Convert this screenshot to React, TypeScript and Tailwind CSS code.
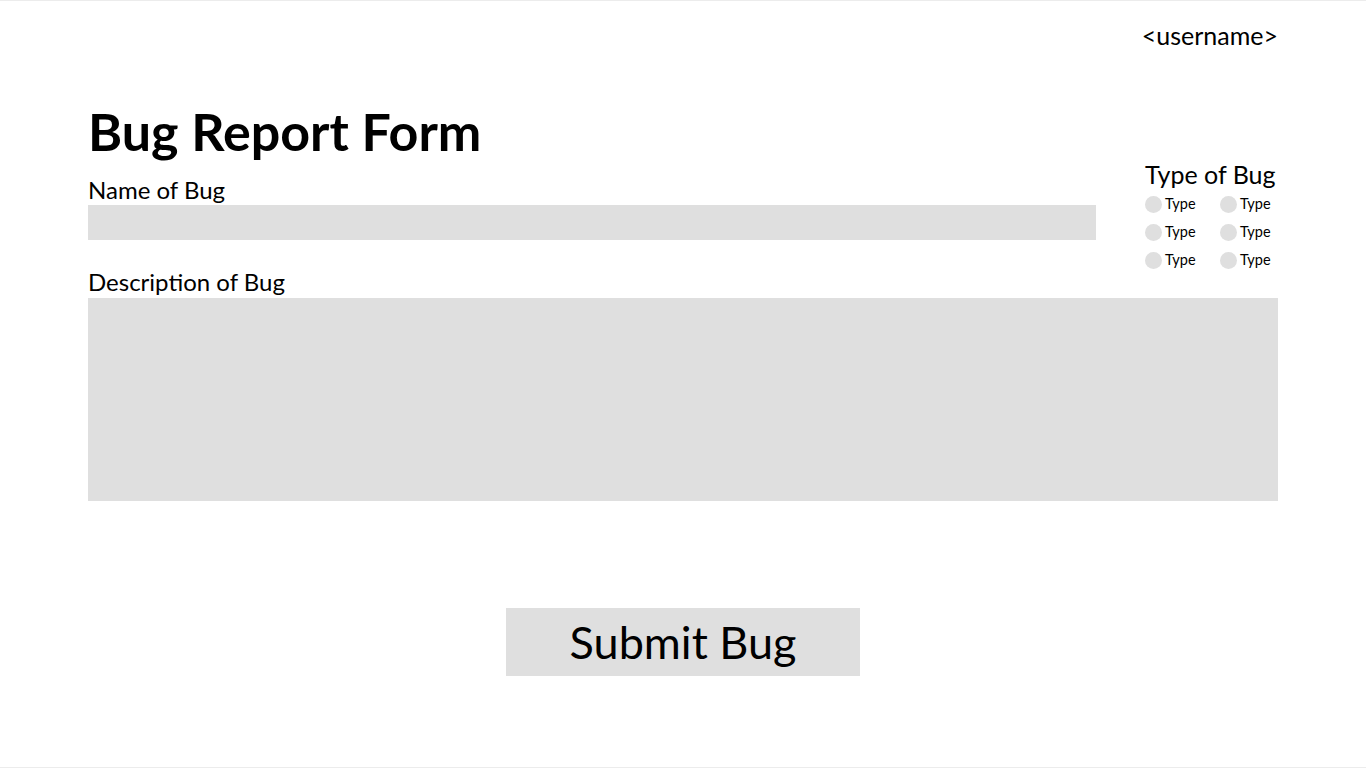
import React from 'react';

const types = ['Type', 'Type', 'Type', 'Type', 'Type', 'Type'];

export default function App() {
  return (
    <div className="w-full h-[768px] bg-white border-t border-b border-[#ececec] text-black overflow-hidden" style={{ fontFamily: 'Lato, "Noto Sans", sans-serif' }}>
      <div className="px-[88px]">
        {/* Header */}
        <div className="flex justify-end pt-[20px] h-[60px]">
          <span className="text-[25px] leading-[28px]">&lt;username&gt;</span>
        </div>

        <div className="flex">
          <div className="w-[1008px]">
            <h1 className="text-[52px] font-bold leading-[56px] mt-[42px]">Bug Report Form</h1>
            <label className="block text-[24px] leading-[26px] mt-[18px]">Name of Bug</label>
            <input type="text" className="block w-full h-[35px] bg-[#dfdfdf] outline-none mt-[2px]" />
          </div>
          <div className="ml-auto w-[133px] pt-[99px]">
            <div className="text-[25px] leading-[28px] whitespace-nowrap">Type of Bug</div>
            <div className="grid grid-cols-[75px_1fr] gap-y-[10px] mt-[7px]">
              {types.map((t, i) => (
                <label key={i} className="flex items-center gap-[3px] text-[14.5px] leading-[18px]">
                  <span className="w-[17px] h-[17px] rounded-full bg-[#dfdfdf]" />
                  {t}
                </label>
              ))}
            </div>
          </div>
        </div>

        {/* Description */}
        <label className="block text-[24px] leading-[26px] mt-[0px]">Description of Bug</label>
        <textarea className="block w-full h-[203px] bg-[#dfdfdf] outline-none resize-none mt-[3px]" />

        <div className="flex justify-center mt-[107px]">
          <button type="button" className="w-[354px] h-[68px] bg-[#dfdfdf] text-[45px] leading-[52px]">Submit Bug</button>
        </div>
      </div>
    </div>
  );
}
